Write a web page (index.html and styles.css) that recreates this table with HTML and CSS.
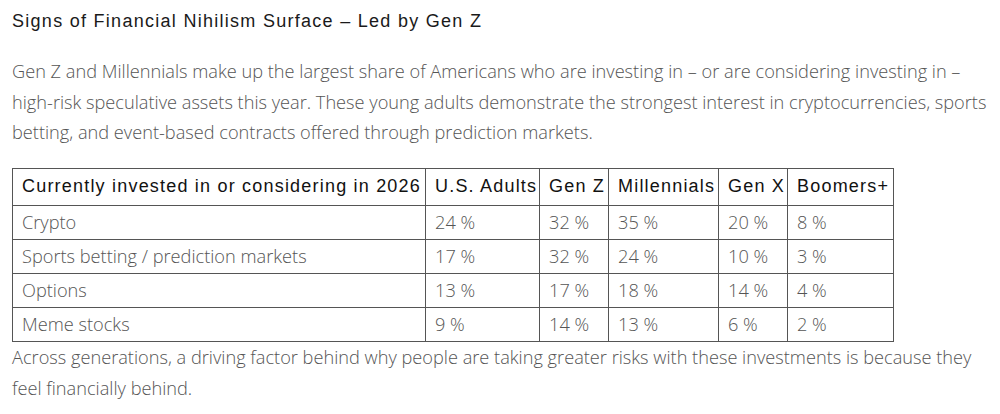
FILE: index.html
```html
<!DOCTYPE html>
<html lang="en">
<head>
<meta charset="utf-8">
<title>Signs of Financial Nihilism Surface</title>
<link rel="stylesheet" href="styles.css">
</head>
<body>
<main class="article">
  <h2 class="title">Signs of Financial Nihilism Surface – Led by Gen Z</h2>
  <p class="lead">Gen Z and Millennials make up the largest share of Americans who are investing in – or are considering investing in – high-risk speculative assets this year. These young adults demonstrate the strongest interest in cryptocurrencies, sports betting, and event-based contracts offered through prediction markets.</p>
  <table class="data">
    <colgroup>
      <col class="c-label">
      <col class="c-us">
      <col class="c-z">
      <col class="c-mil">
      <col class="c-x">
      <col class="c-boom">
    </colgroup>
    <thead>
      <tr>
        <th>Currently invested in or considering in 2026</th>
        <th>U.S. Adults</th>
        <th>Gen Z</th>
        <th>Millennials</th>
        <th>Gen X</th>
        <th>Boomers+</th>
      </tr>
    </thead>
    <tbody>
      <tr><td>Crypto</td><td>24 %</td><td>32 %</td><td>35 %</td><td>20 %</td><td>8 %</td></tr>
      <tr><td>Sports betting / prediction markets</td><td>17 %</td><td>32 %</td><td>24 %</td><td>10 %</td><td>3 %</td></tr>
      <tr><td>Options</td><td>13 %</td><td>17 %</td><td>18 %</td><td>14 %</td><td>4 %</td></tr>
      <tr><td>Meme stocks</td><td>9 %</td><td>14 %</td><td>13 %</td><td>6 %</td><td>2 %</td></tr>
    </tbody>
  </table>
  <p class="closing">Across generations, a driving factor behind why people are taking greater risks with these investments is because they feel financially behind.</p>
</main>
</body>
</html>
```

FILE: styles.css
```css
html, body {
  margin: 0;
  padding: 0;
  background: #ffffff;
}

.article {
  padding: 9px 12px 0 12px;
}

.title {
  margin: 0;
  font-family: "Liberation Sans", Arial, sans-serif;
  font-weight: 400;
  font-size: 18px;
  line-height: 24px;
  letter-spacing: 1.28px;
  color: #1a1a1a;
}

.lead {
  margin: 23px 0 0 0;
  font-family: "Open Sans", sans-serif;
  font-weight: 300;
  font-size: 18.2px;
  line-height: 30.5px;
  color: #555555;
}

.data {
  margin-top: 20px;
  border-collapse: collapse;
  table-layout: fixed;
  width: 881px;
}

.c-label { width: 413px; }
.c-us { width: 114px; }
.c-z { width: 69px; }
.c-mil { width: 110px; }
.c-x { width: 69px; }
.c-boom { width: 106px; }

.data th,
.data td {
  border: 1px solid #555555;
  padding: 0 0 0 9px;
  text-align: left;
  white-space: nowrap;
  overflow: hidden;
}

.data th {
  height: 36px;
  font-family: "Liberation Sans", Arial, sans-serif;
  font-weight: 400;
  font-size: 18px;
  letter-spacing: 1.2px;
  color: #111111;
}

.data td {
  height: 33px;
  font-family: "Open Sans", sans-serif;
  font-weight: 300;
  font-size: 18.2px;
  color: #555555;
}

.closing {
  margin: 0;
  font-family: "Open Sans", sans-serif;
  font-weight: 300;
  font-size: 18.2px;
  line-height: 31px;
  color: #555555;
}
```
